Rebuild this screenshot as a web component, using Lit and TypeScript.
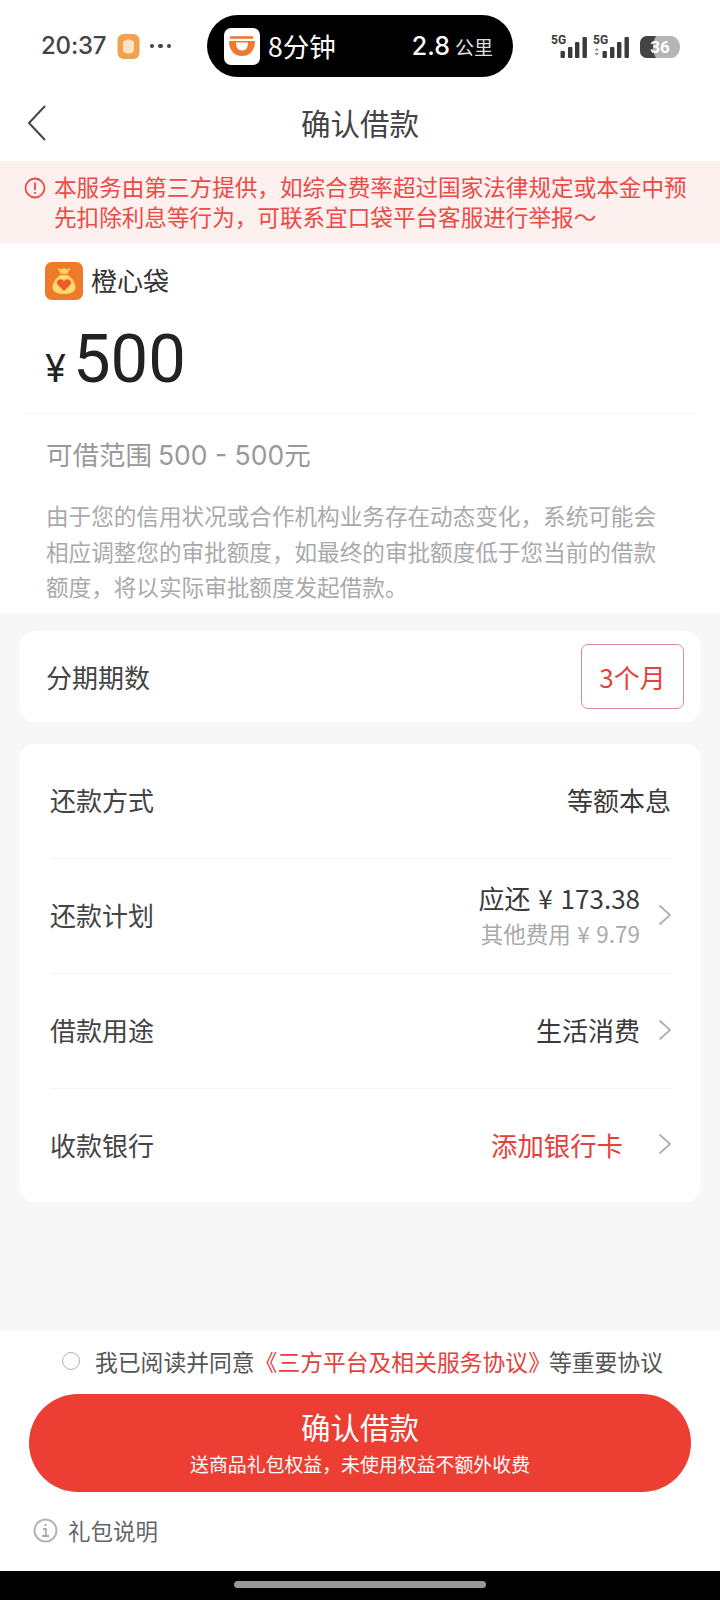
import { LitElement, html, css, svg } from "lit";
import { customElement } from "lit/decorators.js";

const chevron = html`<svg class="chev" viewBox="0 0 14 24" fill="none"><path d="M2 3l10 9-10 9" stroke="#b0b0b0" stroke-width="1.800" stroke-linecap="round" stroke-linejoin="round"/></svg>`;

const signal = (up: boolean) => html`<svg class="sig" viewBox="0 0 37 24">
  <text x="0" y="10" font-size="12" font-weight="700" fill="#3a3a3a" font-family="Roboto, sans-serif">5G</text>
  ${up ? svg`<path d="M1.500 16.500l2.200-2.500 2.200 2.500z M1.500 19l2.200 2.500 2.200-2.500z" fill="#888"/>` : ""}
  <rect x="9.500" y="17" width="4.400" height="7" rx="1" fill="#3a3a3a"/>
  <rect x="17" y="13" width="4.400" height="11" rx="1" fill="#3a3a3a"/>
  <rect x="24" y="8" width="4.400" height="16" rx="1" fill="#3a3a3a"/>
  <rect x="31.500" y="3" width="4.400" height="21" rx="1" fill="#3a3a3a"/>
</svg>`;

@customElement("app-root")
export class AppRoot extends LitElement {
  static styles = css`
    :host {
      display: block;
      width: 720px;
      height: 1600px;
      overflow: hidden;
      background: #f7f7f7;
      font-family: "Noto Sans CJK SC", "Noto Sans", sans-serif;
      color: #333;
      font-weight: 400;
    }
    .page { display: flex; flex-direction: column; height: 1600px; }
    .top { background: #fff; }
    .status { height: 92px; display: flex; align-items: center; padding: 0 40px 0 41px; box-sizing: border-box; position: relative; }
    .clock { font-family: Inter, Roboto, sans-serif; font-size: 24px; font-weight: 500; color: #444; letter-spacing: -0.2px; margin-top: -1px; width: 76px; }
    .shield { width: 23px; height: 25px; margin-right: 10px; }
    .dots { display: flex; gap: 4px; width: 21px; }
    .dots i { width: 4.500px; height: 4.500px; border-radius: 50%; background: #444; }
    .pill { margin-left: 36px; width: 306px; height: 62px; background: #000; border-radius: 31px; display: flex; align-items: center; padding: 0 20px 0 17px; box-sizing: border-box; color: #fff; }
    .didi { width: 36px; height: 37px; background: #fff; border-radius: 7px; display: flex; align-items: center; justify-content: center; margin-right: 8px; }
    .didi svg { width: 36px; height: 36px; }
    .mins { font-size: 26.500px; line-height: 1; flex: 1; }
    .dist { font-family: Inter, Roboto, sans-serif; font-size: 25px; font-weight: 500; margin-right: 2px; }
    .unit { font-size: 19px; margin-left: 3px; color: #ddd; }
    .rightgrp { margin-left: auto; display: flex; align-items: center; gap: 5px; }
    .sig { width: 37px; height: 24px; margin-top: -1px; }
    .batt { width: 40px; height: 22px; margin-left: 5px; margin-top: 1px; }
    .nav { height: 69px; padding-bottom: 9px; box-sizing: border-box; display: flex; align-items: center; justify-content: center; position: relative; font-size: 29.500px; color: #444; }
    .back { position: absolute; left: 26px; top: 12px; width: 22px; height: 38px; }
    .notice { background: #fdf1f0; height: 82px; padding: 11px 20px 0 24px; box-sizing: border-box; display: flex; color: #ec4a45; font-size: 22.600px; line-height: 29.500px; }
    .notice svg { width: 22px; height: 22px; flex: none; margin: 5px 8px 0 0; }
    .notice div { width: 640px; }
    .brand { display: flex; align-items: center; height: 38px; margin: 19px 0 0 45px; font-size: 26px; color: #333; }
    .brand svg { width: 38px; height: 38px; margin-right: 8px; }
    .brand span { margin-top: -4px; }
    .amount { display: flex; align-items: baseline; margin: 13px 26px 0 26px; padding: 7px 0 0 20px; height: 101px; box-sizing: border-box; line-height: 78px; border-bottom: 1px solid #f6f6f6; color: #222; }
    .yen { font-size: 38px; margin-right: 7px; margin-left: -1px; font-family: Inter, sans-serif; }
    .num { font-size: 67px; font-family: Roboto, Inter, sans-serif; font-weight: 400; }
    .range { margin: 21px 0 0 46px; font-size: 26.500px; line-height: 38px; color: #999; }
    .range span { font-family: Inter, Roboto, sans-serif; font-size: 26.500px; }
    .desc { margin: 24px 0 0 46px; width: 630px; font-size: 22.600px; line-height: 35.500px; color: #aaa; padding-bottom: 8px; }
    .body { flex: 1; padding: 18px 19px 0; display: flex; flex-direction: column; gap: 22px; }
    .card { background: #fff; border-radius: 16px; }
    .term { height: 91px; display: flex; align-items: center; justify-content: space-between; padding: 0 17px 0 27px; font-size: 26px; color: #444; }
    .tag { width: 103px; height: 65px; border: 1px solid #e3888a; border-radius: 7px; box-sizing: border-box; display: flex; align-items: center; justify-content: center; color: #e5413c; font-size: 26px; }
    .rows { padding: 0 29px 0 31px; }
    .row { height: 115px; display: flex; align-items: center; justify-content: space-between; border-bottom: 1px solid #f4f4f4; font-size: 26px; color: #444; box-sizing: border-box; padding-bottom: 2px; }
    .row:last-child { border-bottom: none; height: 113px; }
    .val { display: flex; align-items: center; color: #3a3a3a; }
    .plain { margin-right: 1px; }
    .chev { width: 14px; height: 24px; margin-left: 18px; }
    .stack { text-align: right; }
    .stack b { display: block; font-weight: 400; font-size: 26px; line-height: 36px; margin-top: -3px; word-spacing: 2px; }
    .stack small { display: block; font-size: 22.500px; line-height: 35px; color: #aaa; margin-bottom: -4px; word-spacing: 1.500px; }
    .red { color: #e5413c; margin-right: 17px; font-size: 26.400px; }
    .foot { background: #fff; height: 240px; box-sizing: border-box; padding-top: 13px; }
    .agree { display: flex; align-items: center; height: 34px; padding-left: 62px; font-size: 22.800px; color: #555; white-space: nowrap; }
    .radio { width: 16px; height: 16px; border: 1.500px solid #b0b3bf; border-radius: 50%; margin-right: 15px; flex: none; }
    .agree em { font-style: normal; color: #e5413c; margin: 0 -2px 0 0; }
    .cta { margin: 16px 29px 0; height: 98px; border-radius: 49px; background: #ec3e33; color: #fff; display: flex; flex-direction: column; align-items: center; justify-content: center; }
    .cta b { font-weight: 400; font-size: 29.500px; line-height: 42px; margin-top: -3px; }
    .cta span { font-size: 18.900px; line-height: 28px; margin-top: 3px; }
    .gift { display: flex; align-items: center; margin: 20px 0 0 33px; height: 36px; font-size: 22.500px; color: #666; }
    .gift svg { width: 25px; height: 25px; margin-right: 10px; }
    .homebar { height: 29px; background: #000; display: flex; align-items: center; justify-content: center; flex: none; }
    .homebar i { width: 252px; height: 7px; border-radius: 4px; background: #999; margin-top: -2px; }
  `;

  render() {
    return html`<div class="page">
      <div class="top">
        <div class="status">
          <span class="clock">20:37</span>
          <svg class="shield" viewBox="0 0 22 25"><rect width="22" height="25" rx="6" fill="#f2a14c"/><path d="M11 5l5.500 2.500v8c0 2.500-2.500 4-5.500 4s-5.500-1.500-5.500-4v-8z" fill="#fde3bf"/></svg>
          <span class="dots"><i></i><i></i><i></i></span>
          <div class="pill">
            <span class="didi"><svg viewBox="0 0 36 36" fill="none"><path d="M6 9.500h23" stroke="#ee7a30" stroke-width="2.600"/><path d="M5 13h26c0 9-5 15-13 15S5 22 5 13z" fill="#ee7a30"/><path d="M12 14.500h12c0 5-2 8-6 8s-6-3-6-8z" fill="#fff"/></svg></span>
            <span class="mins">8分钟</span>
            <span class="dist">2.8</span><span class="unit">公里</span>
          </div>
          <div class="rightgrp">
            ${signal(false)}${signal(true)}
            <svg class="batt" viewBox="0 0 40 22"><path d="M7 0h24c5 0 9 5 9 11s-4 11-9 11H7a7 7 0 0 1-7-7V7a7 7 0 0 1 7-7z" fill="#b5b5b5"/><path d="M7 0h9c-2 3-3 7-3 11s1 8 3 11H7a7 7 0 0 1-7-7V7a7 7 0 0 1 7-7z" fill="#444"/><text x="20" y="17" text-anchor="middle" font-size="17" font-weight="700" fill="#fff" font-family="Roboto, sans-serif">36</text></svg>
          </div>
        </div>
        <div class="nav">
          <svg class="back" viewBox="0 0 22 38" fill="none"><path d="M19 2L3 19l16 17" stroke="#444" stroke-width="2"/></svg>
          确认借款
        </div>
        <div class="notice">
          <svg viewBox="0 0 22 22" fill="none"><circle cx="11" cy="11" r="9.500" stroke="#ec4a45" stroke-width="1.800"/><path d="M11 5.500v7.500M11 15v1.800" stroke="#ec4a45" stroke-width="1.800"/></svg>
          <div>本服务由第三方提供，如综合费率超过国家法律规定或本金中预先扣除利息等行为，可联系宜口袋平台客服进行举报～</div>
        </div>
        <div class="brand">
          <svg viewBox="0 0 38 38"><rect width="38" height="38" rx="7" fill="#ef7a2c"/><path d="M12.500 6c3 1.500 4 1.500 6.500 0 2.500 1.500 3.500 1.500 6.500 0l-3.500 6h-6z" fill="#fcd35c"/><path d="M15.500 13h7c5 3.500 8 8 8 12.500 0 4.500-5 6.500-11.500 6.500s-11.500-2-11.500-6.500c0-4.500 3-9 8-12.500z" fill="#fdd96a"/><path d="M19 29l-6.500-6.500c-2.500-4.500 4.500-7.500 6.500-3 2-4.500 9-1.500 6.500 3z" fill="#ef5a2a"/></svg>
          <span>橙心袋</span>
        </div>
        <div class="amount"><span class="yen">¥</span><span class="num">500</span></div>
        <div class="range">可借范围 <span>500 - 500</span>元</div>
        <div class="desc">由于您的信用状况或合作机构业务存在动态变化，系统可能会相应调整您的审批额度，如最终的审批额度低于您当前的借款额度，将以实际审批额度发起借款。</div>
      </div>
      <div class="body">
        <div class="card term"><span>分期期数</span><span class="tag">3个月</span></div>
        <div class="card rows">
          <div class="row"><span>还款方式</span><span class="val plain">等额本息</span></div>
          <div class="row"><span>还款计划</span><span class="val"><span class="stack"><b>应还 ¥ 173.38</b><small>其他费用 ¥ 9.79</small></span>${chevron}</span></div>
          <div class="row"><span>借款用途</span><span class="val">生活消费${chevron}</span></div>
          <div class="row"><span>收款银行</span><span class="val"><span class="red">添加银行卡</span>${chevron}</span></div>
        </div>
      </div>
      <div class="foot">
        <div class="agree"><span class="radio"></span>我已阅读并同意<em>《三方平台及相关服务协议》</em>等重要协议</div>
        <div class="cta"><b>确认借款</b><span>送商品礼包权益，未使用权益不额外收费</span></div>
        <div class="gift">
          <svg viewBox="0 0 25 25" fill="none"><circle cx="12.500" cy="12.500" r="11" stroke="#b4b4b4" stroke-width="2"/><path d="M12.500 6v2M10 11h2.800v7M9 18h7" stroke="#a8a8a8" stroke-width="1.800"/></svg>
          礼包说明
        </div>
      </div>
      <div class="homebar"><i></i></div>
    </div>`;
  }
}
